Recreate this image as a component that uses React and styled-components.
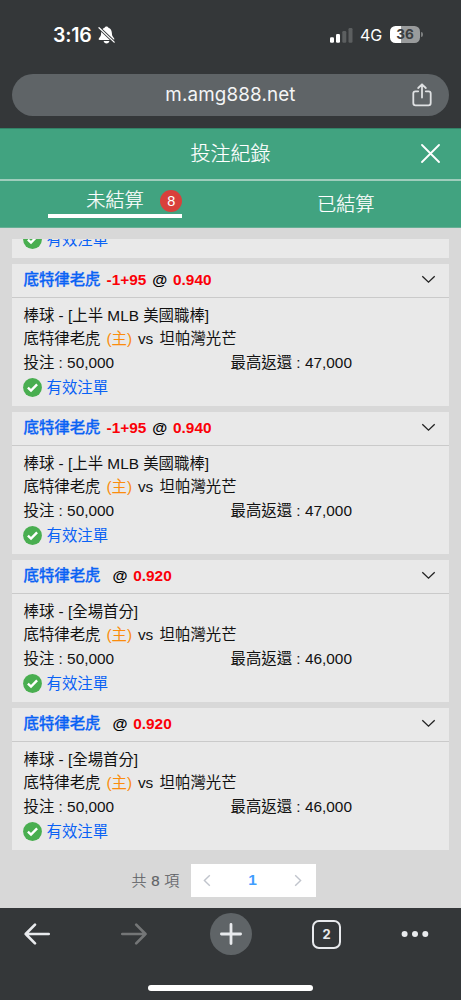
import React from 'react'
import styled, {createGlobalStyle, css} from "styled-components";

const GlobalStyle = createGlobalStyle`
    * {
        box-sizing: border-box;
    }
    body {
        margin: 0;
        background: #d8d8d8;
        font-family: "Liberation Sans", "Noto Sans CJK TC", sans-serif;
        color: #111;
    }
`

const Phone = styled.div`
    display: flex;
    flex-direction: column;
    width: 461px;
    height: 1000px;
    overflow: hidden;
    background: #d8d8d8;
    white-space: nowrap;
`

/* browser chrome */
const BrowserTop = styled.header`
    height: 128px;
    flex: none;
    background: #343739;
    color: #fff;
    font-family: Inter, sans-serif;
`

const StatusBar = styled.div`
    display: flex;
    align-items: center;
    height: 74px;
    padding: 0 38px 5px 53px;
`

const Time = styled.span`
    width: 40px;
    margin-right: 5px;
    font-size: 19.5px;
    font-weight: 600;
    letter-spacing: -0.2px;
`

const Signals = styled.div`
    display: flex;
    align-items: center;
    margin-left: auto;
`

const Network = styled.span`
    width: 22px;
    margin: 0 8px 0 7px;
    font-size: 16px;
    font-weight: 400;
    letter-spacing: -0.1px;
`

const Battery = styled.span`
    width: 30px;
    height: 17px;
    border-radius: 5.5px;
    background: linear-gradient(to right, #fff 36%, #999b9c 36%);
    color: #3b3e40;
    font-size: 13.6px;
    font-weight: 700;
    line-height: 17px;
    text-align: center;
`

const BatteryTip = styled.span`
    width: 2px;
    height: 5px;
    margin-left: 1px;
    border-radius: 0 2px 2px 0;
    background: #7c7f80;
`

const AddressBar = styled.div`
    display: grid;
    grid-template-columns: 1fr auto 1fr;
    align-items: center;
    height: 42px;
    margin: 0 12px;
    padding: 0 17px;
    border-radius: 21px;
    background: #5f6467;
    font-size: 18.8px;
    line-height: 42px;
    color: #f4f5f6;

    svg {
        justify-self: end;
    }
`

const Url = styled.span`
    grid-column: 2;
    letter-spacing: 0.16px;
`

/* page header */
const TitleBar = styled.div`
    display: grid;
    grid-template-columns: 1fr auto 1fr;
    align-items: center;
    flex: none;
    height: 53px;
    padding: 0 20px 1px;
    border-top: 1px solid #328468;
    border-bottom: 2px solid #9fcdbc;
    background: #41a380;
    color: #fff;

    svg {
        justify-self: end;
    }
`

const Title = styled.h1`
    grid-column: 2;
    margin: 0;
    font-size: 20px;
    font-weight: 300;
    line-height: 48px;
    -webkit-text-stroke: 0.2px #fff;
`

const Tabs = styled.nav`
    display: flex;
    flex: none;
    height: 47px;
    border-bottom: 1px solid #66af95;
    background: #41a380;
`

const Tab = styled.div`
    flex: 1;
    display: flex;
    justify-content: center;
    color: #fff;
    font-size: 19.2px;
    font-weight: 300;
    line-height: 46px;
    -webkit-text-stroke: 0.2px #fff;
`

const TabLabel = styled.span`
    display: flex;
    align-items: center;
    height: 47px;
    ${props => props.$active && css`
        width: 134px;
        height: 37px;
        padding: 6px 0 0 38px;
        border-bottom: 4px solid #fff;
        line-height: 27px;
    `}
`

const Count = styled.span`
    width: 22px;
    height: 22px;
    margin-left: auto;
    border-radius: 50%;
    background: #d9403b;
    font-size: 14.5px;
    font-weight: 400;
    line-height: 22px;
    text-align: center;
    -webkit-text-stroke: 0;
`

/* bet list */
const List = styled.div`
    display: flex;
    flex-direction: column;
    justify-content: flex-end;
    gap: 6px;
    flex: none;
    height: 611px;
    margin: 11px 12px 0;
    overflow: hidden;
`

const Card = styled.article`
    display: flex;
    flex-direction: column;
    flex: none;
    padding-bottom: 5px;
    background: #e9e9e9;
    font-size: 15.4px;
`

const CardHead = styled.div`
    display: flex;
    align-items: center;
    height: 34px;
    padding: 0 13px 1px 11.5px;
    border-bottom: 1px solid #cacaca;
    font-weight: 700;
    line-height: 22px;

    svg {
        margin: 0 0 2px auto;
    }
`

const Team = styled.span`
    width: 83px;
    color: #0a62f5;
    font-weight: 500;
    -webkit-text-stroke: 0.3px #0a62f5;
`

const Odds = styled.span`
    color: #fb0007;
`

const At = styled.span`
    margin: 0 5.7px 0 6px;
    color: #000;
`

const CardBody = styled.div`
    padding: 5.7px 11.5px 0;
`

const Line = styled.div`
    display: flex;
    height: 23.6px;
    line-height: 23.6px;
    white-space: pre;
`

const Half = styled.span`
    width: 50%;
`

const Host = styled.span`
    margin: 0 5.8px 0 6px;
    color: #fb8c0c;
`

const Versus = styled.span`
    margin-right: 6.3px;
`

const Status = styled.div`
    display: flex;
    align-items: center;
    gap: 4.5px;
    height: 26.5px;
    padding: 0 11px;
    color: #0a62f5;
    line-height: 24px;
`

const Pagination = styled.div`
    display: flex;
    align-items: center;
    flex: 1;
    padding: 2px 0 0 131.5px;
    color: #606266;
    font-size: 15px;
    font-weight: 300;
`

const Total = styled.span`
    width: 59.5px;
    padding-bottom: 2px;
    white-space: pre;
    letter-spacing: 0.25px;
    -webkit-text-stroke: 0.2px #606266;
`

const Pager = styled.div`
    display: flex;
    align-items: center;
    justify-content: space-between;
    width: 125px;
    height: 33px;
    padding: 0 14px 0 12px;
    background: #fff;
`

const PageNumber = styled.span`
    color: #409eff;
    font-size: 15.5px;
    font-weight: 700;
`

/* browser toolbar */
const Toolbar = styled.footer`
    display: flex;
    flex-direction: column;
    align-items: center;
    justify-content: space-between;
    flex: none;
    height: 92px;
    padding: 5px 0 9px;
    background: #343739;
`

const ToolbarButtons = styled.div`
    display: flex;
    align-items: center;
    width: 100%;
    height: 42px;
    padding-left: 22px;
`

const NavButton = styled.span`
    display: flex;
    width: 97px;
`

const NewTab = styled.span`
    display: flex;
    align-items: center;
    justify-content: center;
    width: 42px;
    height: 42px;
    margin: 0 60px 0 -6px;
    border-radius: 50%;
    background: #5f6467;
`

const TabCount = styled.span`
    width: 29px;
    height: 29px;
    margin-right: 60px;
    border: 2.5px solid #e8eaed;
    border-radius: 7px;
    color: #e8eaed;
    font-family: Inter, sans-serif;
    font-size: 13px;
    font-weight: 700;
    line-height: 25px;
    text-align: center;
`

const HomeIndicator = styled.div`
    width: 165px;
    height: 6px;
    border-radius: 3px;
    background: #fff;
`

const BellOff = () => (
    <svg width="17" height="18" viewBox="0 0 17 18" fill="none">
        <path d="M8.5 0.5C7.4 0.5 6.8 1.1 6.6 1.8C4.2 2.6 3.2 4.8 3.1 7.2C3 9.8 2.4 10.6 1.1 12C0.3 13 0.6 14 1.8 14H15.2C16.4 14 16.7 13 15.9 12C14.6 10.6 14 9.8 13.9 7.2C13.8 4.8 12.8 2.6 10.4 1.8C10.2 1.1 9.6 0.5 8.5 0.5Z" fill="#fff"/>
        <path d="M5.6 15H11.4C11.2 16.6 10 17.4 8.5 17.4S5.8 16.6 5.6 15Z" fill="#fff"/>
        <path d="M0 0.8L17 16.8" stroke="#343739" strokeWidth="3"/>
        <path d="M1 1.7L16.2 16.1" stroke="#fff" strokeWidth="1.3" strokeLinecap="round"/>
    </svg>
)

const SignalBars = () => (
    <svg width="24" height="16" viewBox="0 0 24 16">
        <rect x="1" y="10.2" width="4" height="5.6" rx="1.2" fill="#fff"/>
        <rect x="7" y="7" width="4" height="8.8" rx="1.2" fill="#fff"/>
        <rect x="13.3" y="4" width="4" height="11.8" rx="1.2" fill="#5c5f60"/>
        <rect x="19.5" y="1" width="4" height="14.8" rx="1.2" fill="#5c5f60"/>
    </svg>
)

const Share = () => (
    <svg width="20" height="24" viewBox="0 0 20 24" fill="none" stroke="#dfe1e3" strokeWidth="1.8" strokeLinecap="round" strokeLinejoin="round">
        <path d="M6.2 8.3H3.5Q1.3 8.3 1.3 10.5V20Q1.3 22.3 3.5 22.3H16.5Q18.7 22.3 18.7 20V10.5Q18.7 8.3 16.5 8.3H13.8M10 14.5V1.3M6.2 5L10 1.3L13.8 5"/>
    </svg>
)

const Close = () => (
    <svg width="21" height="20" viewBox="0 0 21 20" stroke="#fff" strokeWidth="1.8" strokeLinecap="round">
        <path d="M2 1L19 18M19 1L2 18"/>
    </svg>
)

const ChevronDown = () => (
    <svg width="15" height="9" viewBox="0 0 15 9" fill="none" stroke="#222" strokeWidth="1.3">
        <path d="M1.3 1.2L7.5 7.2L13.7 1.2"/>
    </svg>
)

const Check = () => (
    <svg width="19" height="19" viewBox="0 0 19 19" fill="none">
        <circle cx="9.5" cy="9.5" r="9.4" fill="#49ae50"/>
        <path d="M4.9 9.6L8 12.6L14.1 6.3" stroke="#fff" strokeWidth="2.4"/>
    </svg>
)

const PageArrow = ({right}) => (
    <svg width="8" height="13" viewBox="0 0 8 13" fill="none" stroke="#c0c4cc" strokeWidth="1.4">
        <path d={right ? "M1.2 1.2L6.6 6.5L1.2 11.8" : "M6.8 1.2L1.4 6.5L6.8 11.8"}/>
    </svg>
)

const Arrow = ({forward}) => (
    <svg width="30" height="24" viewBox="0 0 30 24" fill="none" stroke={forward ? "#747677" : "#e8eaed"} strokeWidth="2.7" strokeLinecap="round" strokeLinejoin="round">
        <path d={forward ? "M3.3 12H26.5M17.2 2.6L26.5 12L17.2 21.4" : "M26.7 12H3.7M13 2.6L3.7 12L13 21.4"}/>
    </svg>
)

const Plus = () => (
    <svg width="24" height="24" viewBox="0 0 24 24" stroke="#e8eaed" strokeWidth="2.8" strokeLinecap="round">
        <path d="M2.4 12H21.6M12 2.4V21.6"/>
    </svg>
)

const More = () => (
    <svg width="28" height="8" viewBox="0 0 28 8" fill="#e8eaed">
        <circle cx="3.6" cy="4" r="3"/>
        <circle cx="14" cy="4" r="3"/>
        <circle cx="24.3" cy="4" r="3"/>
    </svg>
)

const bets = [
    {handicap: '-1+95', odds: '0.940', league: '上半 MLB 美國職棒', payout: '47,000'},
    {handicap: '-1+95', odds: '0.940', league: '上半 MLB 美國職棒', payout: '47,000'},
    {odds: '0.920', league: '全場首分', payout: '46,000'},
    {odds: '0.920', league: '全場首分', payout: '46,000'},
]

const ValidBet = () => (
    <Status><Check/>有效注單</Status>
)

const Bet = ({handicap, odds, league, payout}) => (
    <Card>
        <CardHead>
            <Team>底特律老虎</Team>
            {handicap && <Odds>{handicap}</Odds>}
            <At>@</At>
            <Odds>{odds}</Odds>
            <ChevronDown/>
        </CardHead>
        <CardBody>
            <Line>棒球 - [{league}]</Line>
            <Line>底特律老虎<Host>(主)</Host><Versus>vs</Versus>坦帕灣光芒</Line>
            <Line>
                <Half>投注 : 50,000</Half>
                <Half>最高返還 : {payout}</Half>
            </Line>
        </CardBody>
        <ValidBet/>
    </Card>
)

export default function App() {
    return (
        <Phone>
            <GlobalStyle/>
            <BrowserTop>
                <StatusBar>
                    <Time>3:16</Time>
                    <BellOff/>
                    <Signals>
                        <SignalBars/>
                        <Network>4G</Network>
                        <Battery>36</Battery>
                        <BatteryTip/>
                    </Signals>
                </StatusBar>
                <AddressBar>
                    <Url>m.amg888.net</Url>
                    <Share/>
                </AddressBar>
            </BrowserTop>
            <TitleBar>
                <Title>投注紀錄</Title>
                <Close/>
            </TitleBar>
            <Tabs>
                <Tab><TabLabel $active>未結算<Count>8</Count></TabLabel></Tab>
                <Tab><TabLabel>已結算</TabLabel></Tab>
            </Tabs>
            <List>
                {/* scrolled card, only its last row is left */}
                <Card><ValidBet/></Card>
                {bets.map((bet, i) => <Bet key={i} {...bet}/>)}
            </List>
            <Pagination>
                <Total>共 8 項</Total>
                <Pager>
                    <PageArrow/>
                    <PageNumber>1</PageNumber>
                    <PageArrow right/>
                </Pager>
            </Pagination>
            <Toolbar>
                <ToolbarButtons>
                    <NavButton><Arrow/></NavButton>
                    <NavButton><Arrow forward/></NavButton>
                    <NewTab><Plus/></NewTab>
                    <TabCount>2</TabCount>
                    <More/>
                </ToolbarButtons>
                <HomeIndicator/>
            </Toolbar>
        </Phone>
    )
}
